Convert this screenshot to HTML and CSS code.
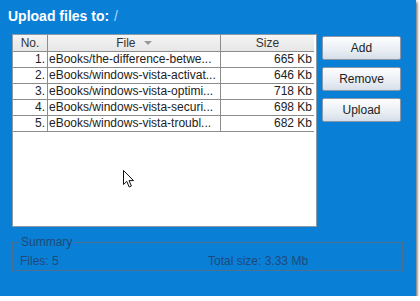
FILE: index.html
```html
<!DOCTYPE html>
<html lang="en">
<head>
    <meta charset="UTF-8">
    <meta name="viewport" content="width=device-width, initial-scale=1.0">
    <title>Upload</title>
    <link rel="stylesheet" href="styles.css">
</head>
<body>
    <div class="window">
        <div class="title">Upload files to: <span class="path">/</span></div>
        <div class="main">
            <div class="list">
                <table class="files">
                    <tr class="head"><th class="no">No.</th><th class="name">File <span class="sort"></span></th><th class="size">Size</th></tr>
                    <tr><td class="no">1.</td><td class="name">eBooks/the-difference-betwe...</td><td class="size">665 Kb</td></tr>
                    <tr><td class="no">2.</td><td class="name">eBooks/windows-vista-activat...</td><td class="size">646 Kb</td></tr>
                    <tr><td class="no">3.</td><td class="name">eBooks/windows-vista-optimi...</td><td class="size">718 Kb</td></tr>
                    <tr><td class="no">4.</td><td class="name">eBooks/windows-vista-securi...</td><td class="size">698 Kb</td></tr>
                    <tr><td class="no">5.</td><td class="name">eBooks/windows-vista-troubl...</td><td class="size">682 Kb</td></tr>
                </table>
                <svg class="cursor" width="13" height="20" viewBox="0 0 13 20">
                    <path d="M1.5 1.5 L1.5 15.5 L4.8 12.4 L7.2 18 L9.4 17 L7 11.6 L11.5 11.6 Z" fill="#fff" stroke="#111" stroke-width="1" stroke-linejoin="miter"/>
                </svg>
            </div>
            <div class="buttons">
                <button class="btn">Add</button>
                <button class="btn">Remove</button>
                <button class="btn">Upload</button>
            </div>
        </div>
        <fieldset class="summary">
            <legend>Summary</legend>
            <div class="stats">
                <span>Files: 5</span>
                <span>Total size: 3.33 Mb</span>
            </div>
        </fieldset>
    </div>
</body>
</html>
```

FILE: styles.css
```css
body{
    margin: 0;
    background-color: #fff;
    font-family: "Liberation Sans", Arial, sans-serif;
}
.window{
    width: 416px;
    height: 296px;
    background-color: #0a7fd6;
    box-shadow: 1px 2px 3px rgba(0, 0, 0, 0.7);
}
.title{
    height: 34px;
    line-height: 32px;
    padding-left: 8px;
    font-size: 14px;
    font-weight: bold;
    color: #fff;
}
.title .path{
    color: #a9d6ff;
    font-weight: normal;
    margin-left: 1px;
}
.main{
    display: flex;
    gap: 5px;
    padding-left: 12px;
}
.list{
    position: relative;
    width: 305px;
    height: 193px;
    box-sizing: border-box;
    background-color: #fff;
    border: 1px solid #8b9aa8;
}
.files{
    border-collapse: collapse;
    font-size: 12px;
    color: #222;
}
.files th, .files td{
    border-right: 1px solid #8c8c8c;
    border-bottom: 1px solid #8c8c8c;
    padding: 0 2px;
    white-space: nowrap;
    overflow: hidden;
}
.files th{
    height: 16px;
    font-weight: normal;
    background: linear-gradient(#f4f4f4, #e6e6e6);
    color: #333;
    text-align: center;
}
.files td{
    height: 15px;
    line-height: 15px;
}
.files .no{
    width: 30px;
    text-align: right;
}
.files td.name{
    width: 169px;
    text-align: left;
    padding-left: 1px;
}
.files .size{
    width: 89px;
    text-align: right;
    border-right: none;
}
.files th.size, .files th.no{
    text-align: center;
}
.sort{
    display: inline-block;
    width: 0;
    height: 0;
    margin-left: 5px;
    vertical-align: 2px;
    border-left: 4px solid transparent;
    border-right: 4px solid transparent;
    border-top: 4px solid #999;
}
.cursor{
    position: absolute;
    left: 109px;
    top: 134px;
}
.buttons{
    display: flex;
    flex-direction: column;
    gap: 7px;
    padding-top: 2px;
}
.btn{
    width: 79px;
    height: 24px;
    font-family: "Liberation Sans", Arial, sans-serif;
    font-size: 12px;
    color: #222;
    border: 1px solid #8898aa;
    border-radius: 2px;
    background: linear-gradient(#fdfdfe, #e9eef4 60%, #d6dee8);
}
.summary{
    margin: 9px 0 0 12px;
    width: 391px;
    box-sizing: border-box;
    padding: 0 7px 2px 7px;
    border: 1px solid #4f6f8f;
    color: #1f4a76;
    font-size: 12px;
}
.summary legend{
    padding: 0 2px;
    line-height: 12px;
    margin-left: -1px;
}
.stats{
    display: grid;
    grid-template-columns: 188px 1fr;
    line-height: 14px;
    padding-top: 6px;
}
```
